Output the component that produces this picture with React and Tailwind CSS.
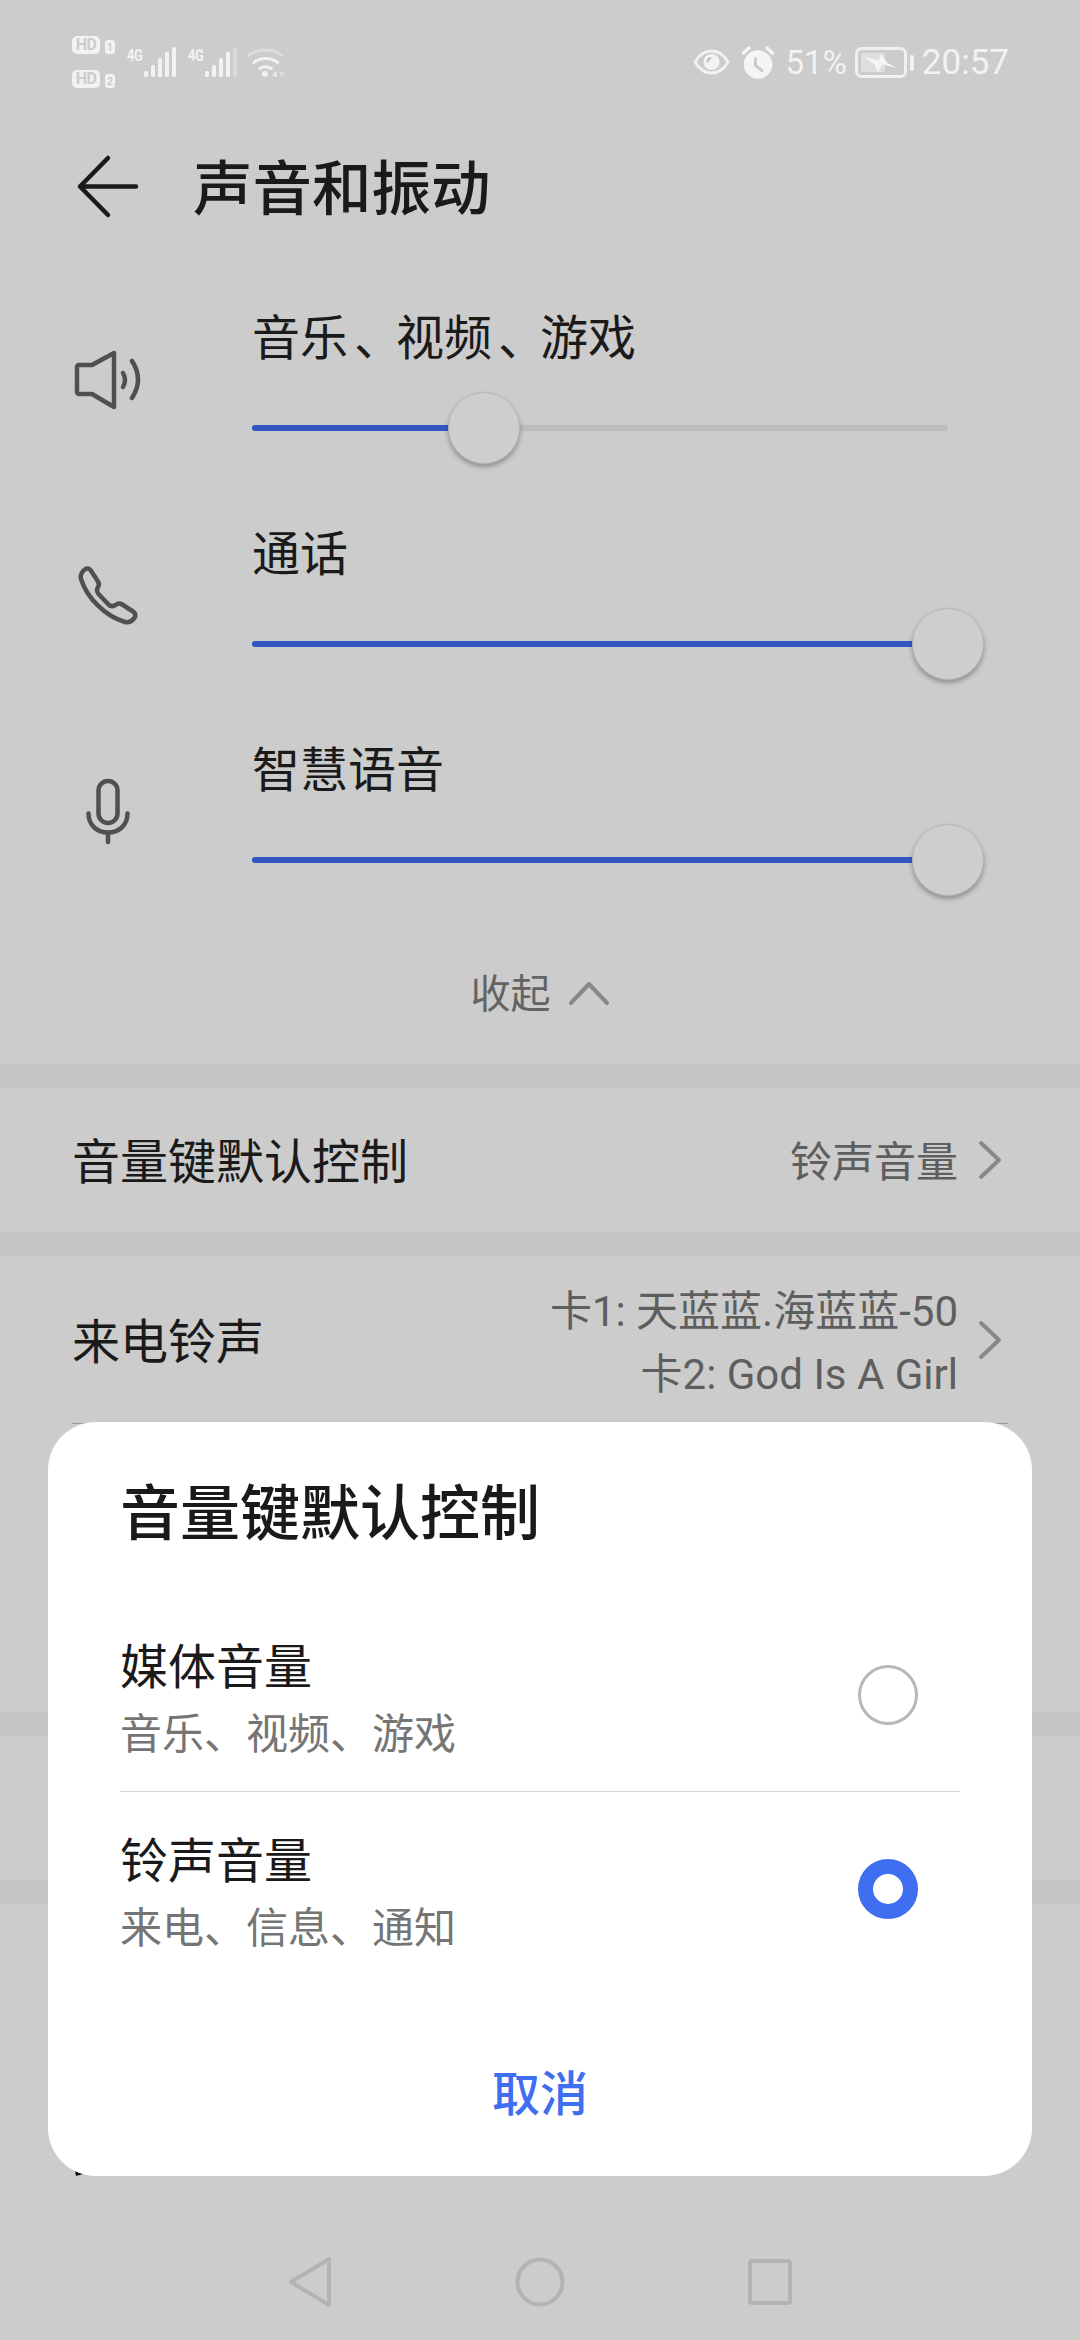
const FONT = 'font-[Roboto,"Noto_Sans_CJK_SC",sans-serif]'

function Signal({ dimLast }) {
  const bars = [
    { x: 0, h: 6 },
    { x: 7, h: 12 },
    { x: 14, h: 19 },
    { x: 21, h: 25 },
    { x: 28, h: 30 },
  ]
  return (
    <svg width="32" height="30" viewBox="0 0 32 30" aria-hidden="true">
      {bars.map((b, i) => (
        <rect
          key={b.x}
          x={b.x}
          y={30 - b.h}
          width="4"
          height={b.h}
          rx="1.5"
          fill={dimLast && i === 4 ? '#dadada' : '#f2f2f2'}
        />
      ))}
    </svg>
  )
}

function Network({ dimLast }) {
  return (
    <div className="flex items-start">
      <span className="w-[17px] origin-top scale-y-125 pt-[1px] text-[13px] font-bold leading-[12px] tracking-[-0.5px] text-[#f2f2f2]">4G</span>
      <Signal dimLast={dimLast} />
    </div>
  )
}

function HdBadge({ n }) {
  return (
    <div className="flex items-end gap-[5px]">
      <span className="flex h-[18px] w-[28px] items-center justify-center rounded-[5px] bg-[#f2f2f2] text-[16px] font-bold leading-none tracking-[-0.5px] text-[#cccccc]">HD</span>
      <span className="flex h-[14px] w-[10px] items-center justify-center rounded-[3px] bg-[#f2f2f2] text-[11px] font-bold leading-none text-[#cccccc]">{n}</span>
    </div>
  )
}

function Wifi() {
  return (
    <svg width="38" height="30" viewBox="0 0 38 30" fill="none" strokeLinecap="round" aria-hidden="true">
      <path d="M1.5 8.5C10 1 26 1 35 8.5" stroke="#dcdcdc" strokeWidth="3" />
      <path d="M7 15.5C13 10 24 10 30.5 15.5" stroke="#f2f2f2" strokeWidth="3" />
      <path d="M13 21.5C16 19 21 19 24.5 21.5" stroke="#f2f2f2" strokeWidth="3" />
      <circle cx="18" cy="27" r="3" fill="#f2f2f2" />
      <text x="25.5" y="30" fontSize="8" fontWeight="700" fill="#f2f2f2">4</text>
      <path d="M31.5 24.5H38L34.7 30Z" fill="#dcdcdc" />
    </svg>
  )
}

function Eye() {
  return (
    <svg width="37" height="26" viewBox="0 0 37 26" fill="none" aria-hidden="true">
      <path d="M2 13C6 6 11.5 2 18.5 2S31 6 35 13C31 20 25.5 24 18.5 24S6 20 2 13Z" stroke="#f2f2f2" strokeWidth="3" strokeLinejoin="round" />
      <circle cx="18.5" cy="13" r="8" fill="#f2f2f2" />
      <path d="M14.5 12.5C14.8 10.8 16 9.6 17.5 9.2" stroke="#bdbdbd" strokeWidth="2" strokeLinecap="round" />
    </svg>
  )
}

function Alarm() {
  return (
    <svg width="32" height="33" viewBox="0 0 32 33" fill="none" strokeLinecap="round" aria-hidden="true">
      <circle cx="16" cy="18.5" r="14.3" fill="#f5f5f5" />
      <path d="M1.5 7L7 2M25 2L30.5 7" stroke="#f5f5f5" strokeWidth="3.5" />
      <path d="M13.5 12.5V19.5L20 24.5" stroke="#cccccc" strokeWidth="3" strokeLinejoin="round" />
    </svg>
  )
}

function Battery() {
  return (
    <svg width="59" height="31" viewBox="0 0 59 31" fill="none" aria-hidden="true">
      <rect x="1.5" y="1.5" width="49" height="28" rx="5" stroke="#f0f0f0" strokeWidth="3" />
      <rect x="6" y="6" width="24" height="19" rx="2" fill="#dedede" />
      <path d="M8.3 9L24 14L25.7 6.7L32.3 15.7L42.3 21.3L27.3 17.3L23.3 25.7L19 17.3Z" fill="#f5f5f5" />
      <rect x="55" y="8" width="4" height="16" rx="2" fill="#f0f0f0" />
    </svg>
  )
}

function StatusBar() {
  return (
    <div className="flex h-[124px] items-center justify-between pl-[72px] pr-[71px]">
      <div className="flex items-center">
        <div className="flex flex-col gap-[16px]">
          <HdBadge n="1" />
          <HdBadge n="2" />
        </div>
        <div className="ml-[12px] flex items-center gap-[12px]">
          <Network />
          <Network dimLast />
        </div>
        <div className="ml-[10px]">
          <Wifi />
        </div>
      </div>
      <div className="flex items-center text-[#f2f2f2]">
        <Eye />
        <div className="ml-[12px]">
          <Alarm />
        </div>
        <span className="ml-[12px] text-[33px] leading-none">51%</span>
        <div className="ml-[8px]">
          <Battery />
        </div>
        <span className="ml-[8px] text-[35px] leading-none">20:57</span>
      </div>
    </div>
  )
}

function SpeakerIcon() {
  return (
    <svg width="72" height="72" viewBox="0 0 72 72" fill="none" stroke="#505050" strokeWidth="4.5" strokeLinecap="round" strokeLinejoin="round" aria-hidden="true">
      <path d="M5 23a2 2 0 0 1 2-2h13L42 9v54L20 50H7a2 2 0 0 1-2-2Z" />
      <path d="M51 29Q55 36 51 43" />
      <path d="M60 17Q72 35.5 60 54" />
    </svg>
  )
}

function PhoneIcon() {
  return (
    <svg width="72" height="72" viewBox="0 0 72 72" fill="none" stroke="#505050" strokeWidth="4.5" strokeLinecap="round" strokeLinejoin="round" aria-hidden="true">
      <path d="M12 10C14 8 17 8 18.5 10L26 21.5C27.5 24 27 26 25.5 28C24.5 30 25 32 26.5 34L36 44C38 46.5 41 46.5 43.5 45C45.5 43.5 47.5 43 49.5 44L61 51.5C64 53.5 64 56.5 62 58.5C59.5 61.5 56.5 63 53 62C33 56 15 38 9 19C8 15.5 9.5 12.5 12 10Z" />
    </svg>
  )
}

function MicIcon() {
  return (
    <svg width="72" height="72" viewBox="0 0 72 72" fill="none" stroke="#505050" strokeWidth="4.5" strokeLinecap="round" strokeLinejoin="round" aria-hidden="true">
      <rect x="26.5" y="5" width="19" height="42" rx="9.5" />
      <path d="M16.5 37.5C16.5 50 26 56.5 36 56.5C46 56.5 55.5 50 55.5 37.5" />
      <path d="M36 57V66" />
    </svg>
  )
}

function Comma() {
  return <span className="ml-[6px] mr-[-6px] inline-block">、</span>
}

function VolumeRow({ icon, label, value }) {
  return (
    <div className="flex h-[216px]">
      <div className="w-[252px] pl-[72px] pt-[92px]">{icon}</div>
      <div className="w-[696px] pt-[56px]">
        <p className="text-[48px] leading-[62px] text-[#1a1a1a]">{label}</p>
        <div className="relative mt-[55px] h-[6px] rounded-full bg-[#bcbcbc]">
          <div className="h-full rounded-full bg-[#3355c4]" style={{ width: `${value}%` }} />
          <div
            className="absolute top-[-33px] ml-[-36px] h-[72px] w-[72px] rounded-full border border-[#b9b9b9] bg-[#cecece] shadow-[0_3px_5px_rgba(0,0,0,0.3)]"
            style={{ left: `${value}%` }}
          />
        </div>
      </div>
    </div>
  )
}

function Chevron() {
  return (
    <svg width="24" height="40" viewBox="0 0 24 40" fill="none" stroke="#888888" strokeWidth="4" strokeLinecap="round" strokeLinejoin="round" className="ml-[20px]" aria-hidden="true">
      <path d="M3 3L21 20L3 37" />
    </svg>
  )
}

function NavBar() {
  return (
    <div className="mt-auto flex h-[116px] items-center justify-center gap-[180px]">
      <svg width="50" height="50" viewBox="0 0 50 50" fill="none" stroke="#b3b3b3" strokeWidth="4" strokeLinejoin="round" aria-hidden="true">
        <path d="M6 25L44 2V48Z" />
      </svg>
      <svg width="50" height="50" viewBox="0 0 50 50" fill="none" stroke="#b3b3b3" strokeWidth="4" aria-hidden="true">
        <circle cx="25" cy="25" r="22.5" />
      </svg>
      <svg width="50" height="50" viewBox="0 0 50 50" fill="none" stroke="#b3b3b3" strokeWidth="4" aria-hidden="true">
        <rect x="5" y="4" width="40" height="42" rx="2" />
      </svg>
    </div>
  )
}

function RadioOption({ title, sub, checked, divider }) {
  return (
    <div className={`mx-[72px] flex h-[193px] items-center justify-between ${divider ? 'box-content border-b border-[#d6d6d6]' : ''}`}>
      <div className="pt-[11px]">
        <p className="text-[48px] leading-[64px] text-[#1a1a1a]">{title}</p>
        <p className="mt-[5px] text-[42px] leading-[60px] text-[#757575]">{sub}</p>
      </div>
      {checked ? (
        <div className="mr-[42px] h-[60px] w-[60px] rounded-full border-[15px] border-[#3f6ff0] bg-white" />
      ) : (
        <div className="mr-[42px] h-[60px] w-[60px] rounded-full border-[3px] border-[#b8b8b8] bg-white" />
      )}
    </div>
  )
}

function Dialog() {
  return (
    <div className="absolute left-[48px] top-[1422px] h-[754px] w-[984px] rounded-[48px] bg-white">
      <h2 className="h-[131px] pl-[72px] pt-[53px] text-[60px] font-medium leading-[80px] text-[#1a1a1a]">音量键默认控制</h2>
      <div className="mt-[45px]">
        <RadioOption title="媒体音量" sub="音乐、视频、游戏" divider />
        <RadioOption title="铃声音量" sub="来电、信息、通知" checked />
      </div>
      <button type="button" className="mt-[60px] block h-[100px] w-full text-center text-[48px] font-medium leading-[100px] text-[#3f6ff0]">
        取消
      </button>
    </div>
  )
}

export default function App() {
  return (
    <div className={`relative flex h-[2340px] w-[1080px] flex-col overflow-hidden bg-[#cccccc] ${FONT}`}>
      <StatusBar />

      <div className="flex h-[128px] items-center pl-[72px]">
        <svg width="72" height="72" viewBox="0 0 72 72" fill="none" stroke="#1a1a1a" strokeWidth="4.5" strokeLinecap="round" strokeLinejoin="round" aria-hidden="true">
          <path d="M36 6L8 34.5L36 63M8 34.5H64" />
        </svg>
        <h1 className="ml-[49px] pt-[6px] text-[59.5px] font-medium leading-none text-[#1a1a1a]">声音和振动</h1>
      </div>

      <VolumeRow
        icon={<SpeakerIcon />}
        label={<>音乐<Comma />视频<Comma />游戏</>}
        value={33.3}
      />
      <VolumeRow icon={<PhoneIcon />} label="通话" value={100} />
      <VolumeRow icon={<MicIcon />} label="智慧语音" value={100} />

      <div className="flex h-[164px] items-center justify-center pt-[22px]">
        <span className="pt-[3px] text-[40px] leading-none text-[#636363]">收起</span>
        <svg width="42" height="26" viewBox="0 0 42 26" fill="none" stroke="#888888" strokeWidth="4" strokeLinecap="round" strokeLinejoin="round" className="ml-[17px]" aria-hidden="true">
          <path d="M3 23L21 4L39 23" />
        </svg>
      </div>

      <div className="h-[24px] bg-[#c4c4c4]" />
      <div className="flex h-[144px] items-center justify-between pl-[72px] pr-[78px]">
        <span className="pt-[6px] text-[48px] text-[#1a1a1a]">音量键默认控制</span>
        <div className="flex items-center">
          <span className="pt-[6px] text-[42px] leading-none text-[#5e5e5e]">铃声音量</span>
          <Chevron />
        </div>
      </div>
      <div className="h-[24px] bg-[#c4c4c4]" />

      <div className="flex h-[456px] flex-col">
        <div className="mx-[72px] flex h-[168px] items-center justify-between border-b border-[#999999] pr-[6px]">
          <span className="pt-[6px] text-[48px] text-[#1a1a1a]">来电铃声</span>
          <div className="flex items-center">
            <div className="pt-[6px] text-right text-[42px] leading-[63px] text-[#5e5e5e]">
              <p>卡1: 天蓝蓝.海蓝蓝-50</p>
              <p>卡2: God Is A Girl</p>
            </div>
            <Chevron />
          </div>
        </div>
      </div>
      <div className="h-[24px] bg-[#c4c4c4]" />
      <div className="h-[144px]" />
      <div className="h-[24px] bg-[#c4c4c4]" />

      <NavBar />

      {/* sliver of the row text behind the dialog's corner */}
      <svg width="8" height="6" viewBox="0 0 8 6" className="absolute left-[75px] top-[2171px]" aria-hidden="true">
        <path d="M0 0L8 3L1 5Z" fill="#111111" />
      </svg>

      <Dialog />
    </div>
  )
}
